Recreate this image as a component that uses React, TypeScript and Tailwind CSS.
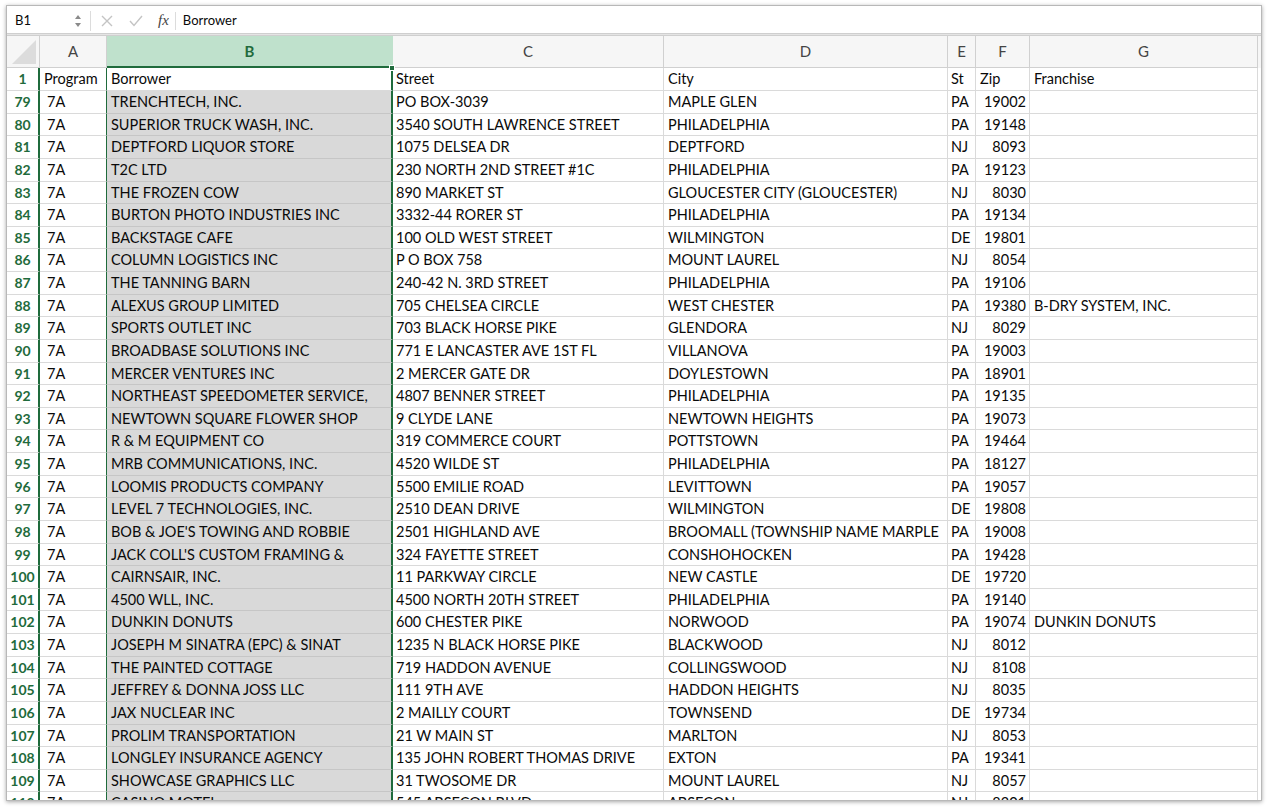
import React from "react";

type Row = [number, string, string, string, string, string, string?];

const rows: Row[] = [
  [79, "TRENCHTECH, INC.", "PO BOX-3039", "MAPLE GLEN", "PA", "19002"],
  [80, "SUPERIOR TRUCK WASH, INC.", "3540 SOUTH LAWRENCE STREET", "PHILADELPHIA", "PA", "19148"],
  [81, "DEPTFORD LIQUOR STORE", "1075 DELSEA DR", "DEPTFORD", "NJ", "8093"],
  [82, "T2C LTD", "230 NORTH 2ND STREET #1C", "PHILADELPHIA", "PA", "19123"],
  [83, "THE FROZEN COW", "890 MARKET ST", "GLOUCESTER CITY (GLOUCESTER)", "NJ", "8030"],
  [84, "BURTON PHOTO INDUSTRIES INC", "3332-44 RORER ST", "PHILADELPHIA", "PA", "19134"],
  [85, "BACKSTAGE CAFE", "100 OLD WEST STREET", "WILMINGTON", "DE", "19801"],
  [86, "COLUMN LOGISTICS INC", "P O BOX 758", "MOUNT LAUREL", "NJ", "8054"],
  [87, "THE TANNING BARN", "240-42 N. 3RD STREET", "PHILADELPHIA", "PA", "19106"],
  [88, "ALEXUS GROUP LIMITED", "705 CHELSEA CIRCLE", "WEST CHESTER", "PA", "19380", "B-DRY SYSTEM, INC."],
  [89, "SPORTS OUTLET INC", "703 BLACK HORSE PIKE", "GLENDORA", "NJ", "8029"],
  [90, "BROADBASE SOLUTIONS INC", "771 E LANCASTER AVE 1ST FL", "VILLANOVA", "PA", "19003"],
  [91, "MERCER VENTURES INC", "2 MERCER GATE DR", "DOYLESTOWN", "PA", "18901"],
  [92, "NORTHEAST SPEEDOMETER SERVICE,", "4807 BENNER STREET", "PHILADELPHIA", "PA", "19135"],
  [93, "NEWTOWN SQUARE FLOWER SHOP", "9 CLYDE LANE", "NEWTOWN HEIGHTS", "PA", "19073"],
  [94, "R & M EQUIPMENT CO", "319 COMMERCE COURT", "POTTSTOWN", "PA", "19464"],
  [95, "MRB COMMUNICATIONS, INC.", "4520 WILDE ST", "PHILADELPHIA", "PA", "18127"],
  [96, "LOOMIS PRODUCTS COMPANY", "5500 EMILIE ROAD", "LEVITTOWN", "PA", "19057"],
  [97, "LEVEL 7 TECHNOLOGIES, INC.", "2510 DEAN DRIVE", "WILMINGTON", "DE", "19808"],
  [98, "BOB & JOE'S TOWING AND ROBBIE", "2501 HIGHLAND AVE", "BROOMALL (TOWNSHIP NAME MARPLE", "PA", "19008"],
  [99, "JACK COLL'S CUSTOM FRAMING &", "324 FAYETTE STREET", "CONSHOHOCKEN", "PA", "19428"],
  [100, "CAIRNSAIR, INC.", "11 PARKWAY CIRCLE", "NEW CASTLE", "DE", "19720"],
  [101, "4500 WLL, INC.", "4500 NORTH 20TH STREET", "PHILADELPHIA", "PA", "19140"],
  [102, "DUNKIN DONUTS", "600 CHESTER PIKE", "NORWOOD", "PA", "19074", "DUNKIN DONUTS"],
  [103, "JOSEPH M SINATRA (EPC) & SINAT", "1235 N BLACK HORSE PIKE", "BLACKWOOD", "NJ", "8012"],
  [104, "THE PAINTED COTTAGE", "719 HADDON AVENUE", "COLLINGSWOOD", "NJ", "8108"],
  [105, "JEFFREY & DONNA JOSS LLC", "111 9TH AVE", "HADDON HEIGHTS", "NJ", "8035"],
  [106, "JAX NUCLEAR INC", "2 MAILLY COURT", "TOWNSEND", "DE", "19734"],
  [107, "PROLIM TRANSPORTATION", "21 W MAIN ST", "MARLTON", "NJ", "8053"],
  [108, "LONGLEY INSURANCE AGENCY", "135 JOHN ROBERT THOMAS DRIVE", "EXTON", "PA", "19341"],
  [109, "SHOWCASE GRAPHICS LLC", "31 TWOSOME DR", "MOUNT LAUREL", "NJ", "8057"],
  [110, "CASINO MOTEL", "545 ABSECON BLVD", "ABSECON", "NJ", "8201"],
];

const cols = "grid grid-cols-[33px_67px_286px_271px_284px_28px_54px_228px]";
const cell = "border-r border-b border-[#dadada] overflow-hidden whitespace-nowrap leading-[22px]";
const aCell = "border-r border-b border-[#dadada] border-r-[#1f6b3c] overflow-hidden whitespace-nowrap leading-[22px]";
const rowHead = "border-b border-[#dadada] border-r-2 border-r-[#1f6b3c] overflow-hidden whitespace-nowrap leading-[22px] text-center font-bold text-[#1f6b3c] text-[14px]";

export default function App() {
  return (
    <div className="w-[1267px] h-[807px] bg-white overflow-hidden pt-[5px] pl-[6px]">
      <div
        className="w-[1256px] h-[796px] bg-white border border-[#b8b8b8] shadow-[0_1px_4px_rgba(0,0,0,0.35)] overflow-hidden text-[#0a0a0a]"
        style={{ fontFamily: "Lato, 'Open Sans', sans-serif" }}
      >
        {/* Formula bar */}
        <div className="h-[28px] flex items-center border-b border-[#cfcfcf] text-[13px] pt-[2px]">
          <div className="w-[83px] h-full flex items-center pl-[8px] relative">
            <span>B1</span>
            <svg className="absolute left-[67px] top-[5px]" width="8" height="16" viewBox="0 0 8 16">
              <path d="M4 2 L7 6 L1 6 Z" fill="#8a8a8a" />
              <path d="M1 10 L7 10 L4 14 Z" fill="#8a8a8a" />
            </svg>
          </div>
          <div className="w-px h-[20px] bg-[#dcdcdc]" />
          <svg className="ml-[10px]" width="12" height="12" viewBox="0 0 12 12">
            <path d="M1 1 L11 11 M11 1 L1 11" stroke="#c4c4c4" strokeWidth="1.4" />
          </svg>
          <svg className="ml-[16px]" width="14" height="12" viewBox="0 0 14 12">
            <path d="M1 6 L5 10.5 L13 1" stroke="#c4c4c4" strokeWidth="1.4" fill="none" />
          </svg>
          <span
            className="ml-[15px] italic text-[15px] text-[#444]"
            style={{ fontFamily: "'Liberation Serif', serif" }}
          >
            fx
          </span>
          <div className="ml-[6px] w-px h-[18px] bg-[#dcdcdc]" />
          <span className="ml-[7px]">Borrower</span>
        </div>
        <div className="h-[2px] bg-[#e4e4e4] border-b border-[#cfcfcf]" />

        {/* Column header row */}
        <div className={`${cols} h-[32px] bg-[#f6f6f6] text-[15px] text-[#444]`}>
          <div className="border-r border-b border-[#d0d0d0] relative">
            <svg className="absolute right-[3px] bottom-[3px]" width="24" height="24" viewBox="0 0 24 24">
              <path d="M24 0 L24 24 L0 24 Z" fill="#dcdcdc" />
            </svg>
          </div>
          <div className="border-r border-b border-[#d0d0d0] flex items-center justify-center">A</div>
          <div className="bg-[#bfe1cc] border-r border-b-2 border-b-[#1f6b3c] border-r-[#bfe1cc] flex items-center justify-center font-bold text-[#1f6b3c]">B</div>
          <div className="border-r border-b border-[#d0d0d0] flex items-center justify-center">C</div>
          <div className="border-r border-b border-[#d0d0d0] flex items-center justify-center">D</div>
          <div className="border-r border-b border-[#d0d0d0] flex items-center justify-center">E</div>
          <div className="border-r border-b border-[#d0d0d0] flex items-center justify-center">F</div>
          <div className="border-r border-b border-[#d0d0d0] flex items-center justify-center">G</div>
        </div>

        {/* Header data row 1 */}
        <div className={`${cols} h-[23px] text-[14.5px]`}>
          <div className={rowHead}>1</div>
          <div className={`${aCell} pl-[4px]`}>Program</div>
          <div className="relative border-b border-[#dadada] border-r-2 border-r-[#1f6b3c] pl-[4px] leading-[22px] whitespace-nowrap bg-white">
            Borrower
            <div className="absolute right-[-4px] top-[-3px] w-[6px] h-[6px] bg-[#1f6b3c] border border-white" />
          </div>
          <div className={`${cell} pl-[3px]`}>Street</div>
          <div className={`${cell} pl-[4px]`}>City</div>
          <div className={`${cell} pl-[3px]`}>St</div>
          <div className={`${cell} pl-[4px]`}>Zip</div>
          <div className={`${cell} pl-[4px]`}>Franchise</div>
        </div>

        {rows.map((r) => (
          <div key={r[0]} className={`${cols} h-[22.63px] text-[14.5px]`}>
            <div className={rowHead}>{r[0]}</div>
            <div className={`${aCell} pl-[7px]`}>7A</div>
            <div className="border-b border-[#c6c6c6] border-r-2 border-r-[#1f6b3c] bg-[#d9d9d9] pl-[4px] leading-[22px] whitespace-nowrap overflow-hidden">{r[1]}</div>
            <div className={`${cell} pl-[3px]`}>{r[2]}</div>
            <div className={`${cell} pl-[4px]`}>{r[3]}</div>
            <div className={`${cell} pl-[3px]`}>{r[4]}</div>
            <div className={`${cell} pr-[3px] text-right`}>{r[5]}</div>
            <div className={`${cell} pl-[4px]`}>{r[6] ?? ""}</div>
          </div>
        ))}
      </div>
    </div>
  );
}
